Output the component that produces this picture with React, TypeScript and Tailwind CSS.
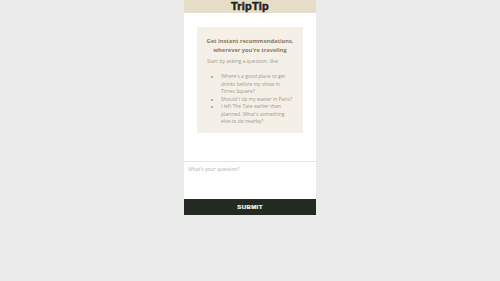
import React from "react";

export default function App() {
  return (
    <div className="min-h-screen w-full bg-[#ebebeb] flex justify-center" style={{ fontFamily: "'Open Sans', 'Noto Sans', sans-serif" }}>
      <div className="w-[132px] h-[215px] bg-white flex flex-col">
        <header className="h-[13px] bg-[#e6ddc9] flex items-center justify-center">
          <span className="text-[11px] font-black leading-none text-[#1f241c] [-webkit-text-stroke:0.5px_#1f241c] tracking-[0.2px]" style={{ fontFamily: "'Liberation Sans', Arial, sans-serif" }}>TripTip</span>
        </header>
        <div className="px-[13px] pt-[14px] h-[148px]">
          <div className="bg-[#f5f0e7] h-[106px] px-[10px] pt-[10px] text-[#a1988a]">
            <h2 className="text-[5.7px] font-bold leading-[9px] text-center text-[#857d6e] whitespace-nowrap -mx-[4px]">
              Get instant recommendations,<br />wherever you're traveling
            </h2>
            <p className="mt-[3px] text-[5px] leading-[7.5px]">Start by asking a question, like:</p>
            <ul className="mt-[7.5px] ml-[10px] list-disc text-[5px] leading-[7.5px] pl-[4px]">
              <li>Where's a good place to get drinks before my show in Times Square?</li>
              <li>Should I tip my waiter in Paris?</li>
              <li>I left The Tate earlier than planned. What's something else to do nearby?</li>
            </ul>
          </div>
        </div>
        <div className="border-t border-[#e4e4e4] h-[38px] px-[4px] pt-[4px]">
          <div className="text-[5px] text-[#b0b0b0] leading-[7px]">What's your question?</div>
        </div>
        <button className="h-[16px] bg-[#222a21] text-white text-[6px] font-black tracking-[0.4px] flex items-center justify-center [-webkit-text-stroke:0.2px_white]" style={{ fontFamily: "'Liberation Sans', Arial, sans-serif" }}>
          SUBMIT
        </button>
      </div>
    </div>
  );
}
